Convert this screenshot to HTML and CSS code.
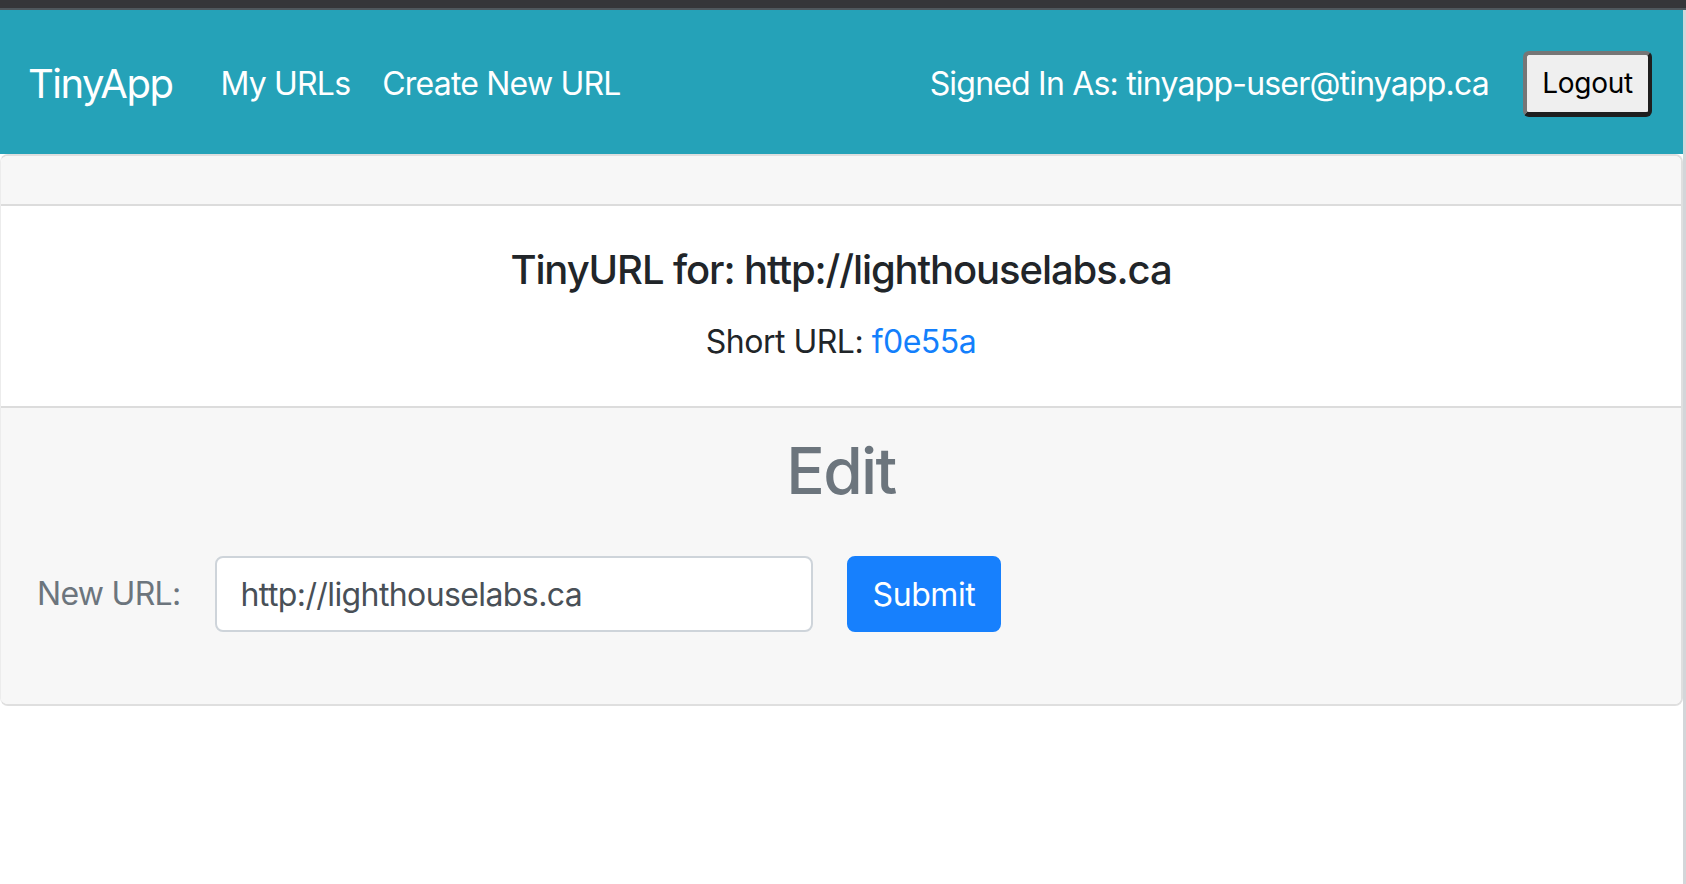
FILE: index.html
```html
<!DOCTYPE html>
<html lang="en">
<head>
<meta charset="utf-8">
<title>TinyApp</title>
<link rel="stylesheet" href="styles.css">
</head>
<body>
<div class="topbar"></div>
<div class="page">
  <nav class="navbar">
    <a class="brand" href="#">TinyApp</a>
    <ul class="nav-links">
      <li><a href="#">My URLs</a></li>
      <li><a href="#">Create New URL</a></li>
    </ul>
    <div class="nav-right">
      <span class="signed">Signed In As: tinyapp-user@tinyapp.ca</span>
      <button class="logout" type="button">Logout</button>
    </div>
  </nav>
  <main class="card">
    <div class="card-header"></div>
    <div class="card-body">
      <h5 class="card-title">TinyURL for: http://lighthouselabs.ca</h5>
      <p class="card-text">Short URL: <a href="#">f0e55a</a></p>
    </div>
    <div class="card-footer">
      <h2 class="edit-title">Edit</h2>
      <form class="edit-form">
        <label class="form-label" for="longURL">New URL:</label>
        <input class="form-control" id="longURL" type="text" value="http://lighthouselabs.ca">
        <button class="btn-primary" type="button">Submit</button>
      </form>
    </div>
  </main>
</div>
</body>
</html>
```
FILE: styles.css
```css
* { box-sizing: border-box; }
html, body { margin: 0; padding: 0; background: #fff; }
body {
  font-family: Inter, Roboto, "Liberation Sans", sans-serif;
  color: #212529;
  font-size: 32px;
  line-height: 1.5;
}
.topbar {
  height: 10px;
  background: #353639;
  border-bottom: 2px solid #4f585d;
}
.page {
  min-height: 874px;
  border-right: 3px solid #d3d6d9;
}
.navbar {
  height: 144px;
  background: #25a2b8;
  display: flex;
  align-items: center;
  padding: 3px 31px 0 28px;
}
.brand {
  font-size: 40px;
  color: #fff;
  text-decoration: none;
  margin-right: 32px;
  letter-spacing: -1.5px;
}
.nav-links {
  list-style: none;
  margin: 0;
  padding: 0;
  display: flex;
}
.nav-links a {
  display: block;
  padding: 0 16px;
  color: #fff;
  text-decoration: none;
  letter-spacing: -0.8px;
}
.nav-right {
  margin-left: auto;
  display: flex;
  align-items: center;
  gap: 34px;
}
.signed {
  color: #fff;
  letter-spacing: -0.8px;
}
.logout {
  font-family: Inter, Roboto, sans-serif;
  font-size: 28px;
  color: #000;
  background: #efefef;
  width: 129px;
  height: 66px;
  padding: 0;
  border-style: solid;
  border-width: 4px 4px 5px 4px;
  border-color: #767676 #1f1f1f #1f1f1f #767676;
  border-radius: 6px;
  letter-spacing: -0.3px;
}
.card {
  display: block;
  border: 2px solid #dfdfdf;
  border-left: 1px solid #ececec;
  border-radius: 8px;
  overflow: hidden;
}
.card-header {
  height: 50px;
  background: #f7f7f7;
  border-bottom: 2px solid #dcdcdc;
}
.card-body {
  padding: 40px;
  text-align: center;
  background: #fff;
}
.card-title {
  margin: 0 0 24px;
  font-size: 40px;
  font-weight: 500;
  line-height: 48px;
  letter-spacing: -1.1px;
}
.card-text {
  margin: 0;
  line-height: 48px;
  letter-spacing: -0.5px;
}
.card-text a {
  color: #137ffc;
  text-decoration: none;
}
.card-footer {
  background: #f7f7f7;
  border-top: 2px solid #dcdcdc;
  padding: 24px 36px;
  color: #6c757d;
}
.edit-title {
  margin: 0 0 47px;
  text-align: center;
  font-size: 64px;
  font-weight: 500;
  line-height: 77px;
  letter-spacing: -1.7px;
}
.edit-form {
  display: flex;
  align-items: center;
  gap: 34px;
  margin: 0 0 48px;
}
.form-label {
  color: #6c757d;
  letter-spacing: -0.7px;
}
.form-control {
  width: 598px;
  height: 76px;
  padding: 0 24px;
  font-family: Inter, Roboto, sans-serif;
  font-size: 32px;
  color: #495057;
  background: #fff;
  border: 2px solid #ced4da;
  border-radius: 8px;
  letter-spacing: -0.6px;
  outline: none;
}
.btn-primary {
  height: 76px;
  padding: 0 24px;
  font-family: Inter, Roboto, sans-serif;
  font-size: 32px;
  color: #fff;
  background: #1780fd;
  border: 2px solid #1780fd;
  border-radius: 8px;
  letter-spacing: -0.4px;
}
```
